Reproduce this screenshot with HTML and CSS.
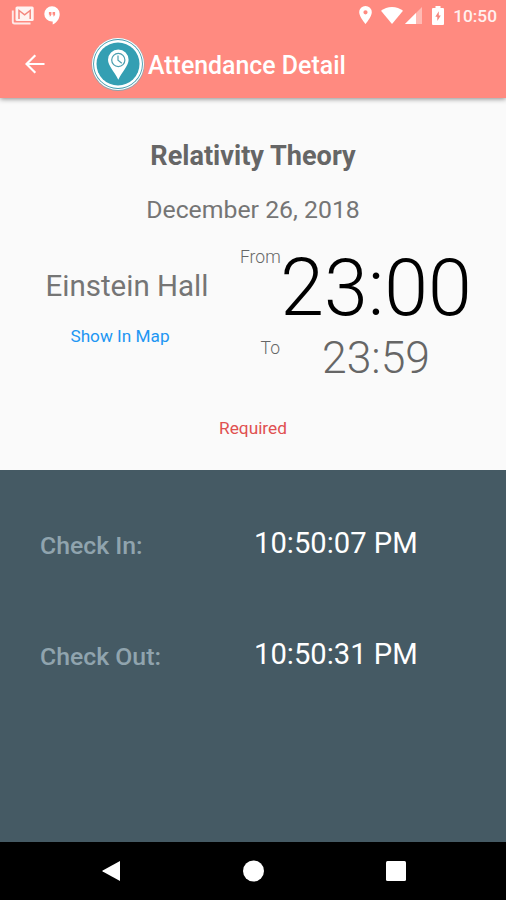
FILE: index.html
```html
<!DOCTYPE html>
<html lang="en">
<head>
    <meta charset="UTF-8">
    <meta name="viewport" content="width=device-width, initial-scale=1.0">
    <title>Attendance Detail</title>
    <link rel="stylesheet" href="styles.css">
</head>
<body>
    <header class="app-header">
        <div class="status-bar">
            <svg class="mail-icon" width="23" height="19" viewBox="0 0 23 19">
                <path d="M1.800 4.500v11.300c0 1 .8 1.700 1.700 1.700H19.500" fill="none" stroke="#ffe9e7" stroke-width="1.900"/>
                <rect x="4.500" y="0.500" width="18.200" height="14.500" rx="1.600" fill="#fff3f2"/>
                <path d="M8 13V4.500l5.600 4.300 5.600-4.300V13" fill="none" stroke="#f4877f" stroke-width="1.500"/>
            </svg>
            <svg class="chat-icon" width="16" height="19" viewBox="0 0 16 19">
                <path d="M8 0.200a7.700 7.700 0 0 0 0 15.400h.7v2.900c4.200-2 7-5.900 7-10.600A7.700 7.700 0 0 0 8 .2z" fill="#fff"/>
                <path d="M4.900 5.900h2.500v2.800L6.400 10.200H5.300l.8-1.500H4.900zM8.600 5.900h2.500v2.800l-1 1.500H9l.8-1.500H8.600z" fill="#ff8a80"/>
            </svg>
            <svg class="location-icon" width="13" height="18" viewBox="0 0 13 18">
                <path d="M6.500 0A6.300 6.300 0 0 0 .2 6.300C.2 11 6.500 18 6.500 18s6.300-7 6.300-11.700A6.300 6.300 0 0 0 6.500 0zm0 8.400a2.100 2.100 0 1 1 0-4.200 2.100 2.100 0 0 1 0 4.200z" fill="#fff"/>
            </svg>
            <svg class="wifi-icon" width="22" height="17" viewBox="0 0 22 17">
                <path d="M11 17 0 3.800C3 1.400 6.800 0 11 0s8 1.400 11 3.800z" fill="#fff"/>
            </svg>
            <svg class="signal-icon" width="17" height="17" viewBox="0 0 17 17">
                <path d="M0 17 17 0v17z" fill="#ffbab4"/>
                <path d="M0 17 11 6v11z" fill="#fff"/>
            </svg>
            <svg class="battery-icon" width="12" height="19" viewBox="0 0 12 19">
                <path d="M3.500 0h5v2h2.200c.8 0 1.300.5 1.300 1.300v14.400c0 .8-.5 1.300-1.300 1.300H1.300C.5 19 0 18.500 0 17.700V3.300C0 2.500.5 2 1.300 2h2.200z" fill="#fff"/>
                <path d="M6.800 5.200 3.300 10.700h2V15l3.500-5.500h-2z" fill="#f4877f"/>
            </svg>
            <span class="clock">10:50</span>
        </div>
        <div class="toolbar">
            <svg class="back-icon" width="20" height="20" viewBox="0 0 20 20">
                <path d="M19.500 10H2M10.300 1.200 1.500 10l8.800 8.800" fill="none" stroke="#fff" stroke-width="2.200"/>
            </svg>
            <svg class="logo" width="54" height="56" viewBox="0 0 54 56">
                <circle cx="27" cy="28.500" r="26.500" fill="#8fa5ad"/>
                <circle cx="27" cy="28" r="26" fill="#fff"/>
                <circle cx="27" cy="28" r="24.900" fill="#3e9db0"/>
                <circle cx="27" cy="28" r="24" fill="#fff"/>
                <circle cx="27" cy="28" r="21.500" fill="#349fb3"/>
                <path d="M27.300 13.500a10.300 10.300 0 0 0-10.300 10.300c0 6 6.500 12 10.300 20 3.800-8 10.300-14 10.300-20a10.300 10.300 0 0 0-10.300-10.300z" fill="#fff"/>
                <circle cx="27.300" cy="24" r="6.600" fill="none" stroke="#4c9fb0" stroke-width="1.200"/>
                <path d="M27 19.500v4.700l3.800 3" fill="none" stroke="#4c9fb0" stroke-width="1.200"/>
            </svg>
            <h1>Attendance Detail</h1>
        </div>
    </header>

    <main class="event">
        <h2>Relativity Theory</h2>
        <p class="date">December 26, 2018</p>
        <div class="event-info">
            <div class="place">
                <span class="hall">Einstein Hall</span>
                <a class="map-link">Show In Map</a>
            </div>
            <div class="times">
                <span class="time-label">From</span>
                <span class="time-from">23:00</span>
                <span class="time-label">To</span>
                <span class="time-to">23:59</span>
            </div>
        </div>
        <p class="required">Required</p>
    </main>

    <section class="checks">
        <div class="check-row">
            <span class="check-label">Check In:</span>
            <span class="check-time">10:50:07 PM</span>
        </div>
        <div class="check-row">
            <span class="check-label">Check Out:</span>
            <span class="check-time">10:50:31 PM</span>
        </div>
    </section>

    <nav class="nav-bar">
        <svg width="20" height="22" viewBox="0 0 20 22">
            <path d="M19 1v20L1.700 11.600a.7.700 0 0 1 0-1.200z" fill="#fff"/>
        </svg>
        <svg width="22" height="22" viewBox="0 0 22 22">
            <circle cx="10.500" cy="11" r="10.500" fill="#fff"/>
        </svg>
        <svg width="20" height="20" viewBox="0 0 20 20">
            <rect width="20" height="20" rx="1.500" fill="#fff"/>
        </svg>
    </nav>
</body>
</html>
```

FILE: styles.css
```css
* {
    box-sizing: border-box;
}
body {
    margin: 0;
    height: 900px;
    display: flex;
    flex-direction: column;
    font-family: Roboto, sans-serif;
    background: #fafafa;
    color: #757575;
    overflow: hidden;
}
h1, h2, p {
    margin: 0;
}
svg {
    display: block;
    flex: none;
}
.app-header {
    height: 98px;
    flex: none;
    background: #ff8a80;
    color: white;
    box-shadow: 0 1px 5px rgba(0,0,0,0.45);
}
.status-bar {
    display: flex;
    align-items: center;
    height: 30px;
    padding: 0 9px 0 11px;
}
.chat-icon {
    margin-left: 10px;
}
.location-icon {
    margin-left: auto;
}
.wifi-icon {
    margin-left: 9px;
}
.signal-icon {
    margin-left: 2px;
}
.battery-icon {
    margin-left: 10px;
}
.clock {
    margin-left: 9px;
    padding-top: 2px;
    font-size: 17.3px;
    font-weight: 500;
    color: #fff0ef;
}
.toolbar {
    display: flex;
    align-items: center;
    height: 68px;
    padding-left: 25px;
}
.logo {
    margin-left: 46px;
}
h1 {
    margin-left: 3px;
    padding-top: 2px;
    font-size: 24.9px;
    font-weight: 500;
}
.event {
    height: 372px;
    flex: none;
    text-align: center;
    padding-top: 41px;
}
h2 {
    font-size: 27.1px;
    line-height: 34px;
    font-weight: 700;
    color: #666;
}
.date {
    margin-top: 20px;
    font-size: 24.8px;
    line-height: 34px;
}
.event-info {
    display: grid;
    grid-template-columns: 240px 232px;
    height: 171px;
    margin-top: 19px;
}
.place {
    display: flex;
    flex-direction: column;
    padding-top: 22px;
}
.hall {
    padding-left: 14px;
    font-size: 29.5px;
    line-height: 36px;
}
.map-link {
    margin-top: 21px;
    font-size: 17.2px;
    line-height: 22px;
    color: #2196f3;
}
.times {
    display: grid;
    grid-template-columns: 40px 192px;
    grid-template-rows: 91px 50px;
}
.time-label {
    font-size: 17.5px;
    line-height: 23px;
    text-align: right;
    font-weight: 300;
    color: #666;
}
.time-from {
    font-size: 78.8px;
    line-height: 85px;
    font-weight: 300;
    color: black;
}
.time-to {
    font-size: 44.5px;
    line-height: 42px;
    font-weight: 300;
    color: #666;
}
.required {
    font-size: 17.3px;
    line-height: 22px;
    color: #e05050;
}
.checks {
    flex: 1;
    padding: 45px 40px 0;
    background: #455a64;
}
.check-row {
    display: grid;
    grid-template-columns: 214px 1fr;
    align-items: center;
    height: 55px;
    margin-bottom: 56px;
}
.check-label {
    font-size: 24.8px;
    font-weight: 500;
    color: #90a4ae;
    padding-top: 6px;
}
.check-time {
    font-size: 29.2px;
    color: white;
}
.nav-bar {
    display: flex;
    justify-content: space-between;
    align-items: center;
    height: 58px;
    flex: none;
    padding: 0 100px 0 101px;
    background: black;
}
```
